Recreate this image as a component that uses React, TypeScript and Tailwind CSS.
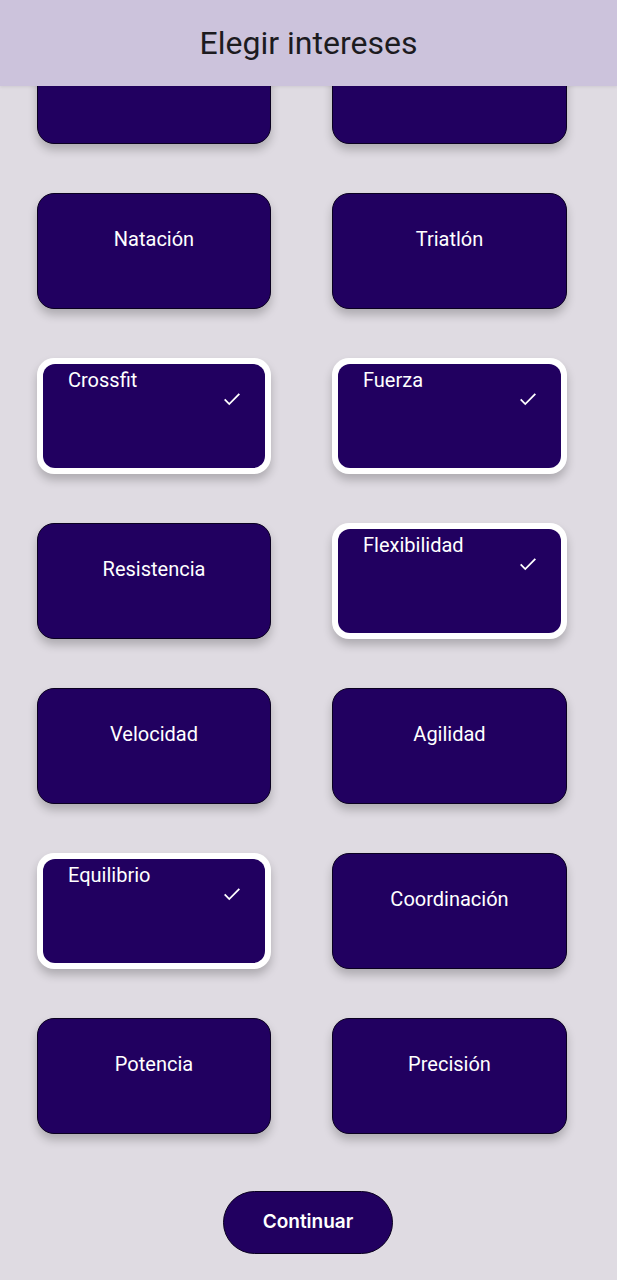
import React, { useState } from 'react';

const items = [
  { name: 'Ciclismo', selected: false },
  { name: 'Running', selected: false },
  { name: 'Natación', selected: false },
  { name: 'Triatlón', selected: false },
  { name: 'Crossfit', selected: true },
  { name: 'Fuerza', selected: true },
  { name: 'Resistencia', selected: false },
  { name: 'Flexibilidad', selected: true },
  { name: 'Velocidad', selected: false },
  { name: 'Agilidad', selected: false },
  { name: 'Equilibrio', selected: true },
  { name: 'Coordinación', selected: false },
  { name: 'Potencia', selected: false },
  { name: 'Precisión', selected: false },
];

const Check = () => (
  <svg className="h-[22px] w-[22px]" viewBox="0 0 24 24" fill="none" stroke="white" strokeWidth={2}>
    <path d="M4 12.5l5 5L20 6.5" />
  </svg>
);

const App: React.FC = () => {
  const [chosen, setChosen] = useState<string[]>(items.filter(i => i.selected).map(i => i.name));

  const toggle = (name: string) => {
    setChosen(prev => (prev.includes(name) ? prev.filter(n => n !== name) : [...prev, name]));
  };

  return (
    <div className="relative min-h-[1280px] w-full bg-[#dfdbe2]" style={{ fontFamily: 'Roboto, "Noto Sans", sans-serif' }}>
      {/* app bar sits over the scrolled list */}
      <div className="absolute left-0 right-0 top-0 z-10 flex h-[86px] items-center justify-center bg-[#ccc3dc] shadow-[0_1px_3px_rgba(0,0,0,0.08)]">
        <h1 className="text-[32px] text-[#1c1b1f]">Elegir intereses</h1>
      </div>

      <div className="grid grid-cols-[234px_235px] gap-x-[61px] gap-y-[49px] pl-[37px] pt-[28px]">
        {items.map(item => {
          const on = chosen.includes(item.name);
          return on ? (
            <button
              key={item.name}
              onClick={() => toggle(item.name)}
              className="h-[116px] rounded-[17px] bg-white p-[6px] shadow-[0_6px_10px_rgba(0,0,0,0.22)]"
            >
              <div className="relative flex h-full w-full items-start rounded-[12px] bg-[#210060] pl-[25px] pt-[1px]">
                <span className="text-[20px] font-normal text-white">{item.name}</span>
                <span className="absolute right-[22px] top-[24px]">
                  <Check />
                </span>
              </div>
            </button>
          ) : (
            <button
              key={item.name}
              onClick={() => toggle(item.name)}
              className="flex h-[116px] items-start justify-center rounded-[17px] border border-[#0a0020] bg-[#210060] pt-[30px] shadow-[0_6px_10px_rgba(0,0,0,0.22)]"
            >
              <span className="text-[20px] font-normal text-white">{item.name}</span>
            </button>
          );
        })}
      </div>

      <div className="flex justify-center pt-[57px] pb-[26px]">
        <button className="ml-[-1px] h-[63px] w-[170px] rounded-full border border-[#0a0020] bg-[#210060] text-[19px] font-semibold text-white" style={{ fontFamily: 'Inter, sans-serif' }}>
          Continuar
        </button>
      </div>
    </div>
  );
};

export default App;
